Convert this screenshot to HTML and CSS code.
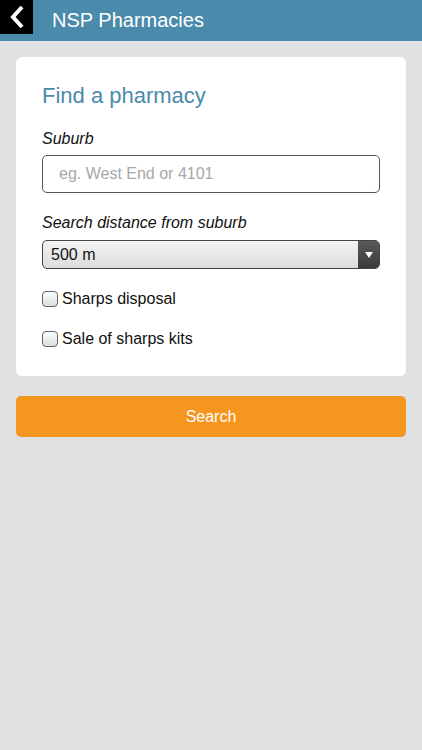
FILE: index.html
```html
<!DOCTYPE html>
<html lang="en">
<head>
    <meta charset="UTF-8">
    <meta name="viewport" content="width=device-width, initial-scale=1.0">
    <title>NSP Pharmacies</title>
    <link rel="stylesheet" href="styles.css">
</head>
<body>
    <header class="topbar">
        <a class="back" href="#">
            <svg width="16" height="24" viewBox="0 0 16 24">
                <path d="M13 2 L4 12 L13 22" fill="none" stroke="#fff" stroke-width="4"/>
            </svg>
        </a>
        <h1 class="title">NSP Pharmacies</h1>
    </header>

    <main class="content">
        <form class="card">
            <h2 class="card-title">Find a pharmacy</h2>

            <label class="field-label" for="suburb">Suburb</label>
            <input class="text-input" id="suburb" type="text" placeholder="eg. West End or 4101">

            <label class="field-label" for="distance">Search distance from suburb</label>
            <div class="select">
                <span class="select-value">500 m</span>
                <span class="select-arrow"></span>
            </div>

            <label class="check"><span class="box"></span>Sharps disposal</label>
            <label class="check"><span class="box"></span>Sale of sharps kits</label>
        </form>

        <button class="search-btn" type="button">Search</button>
    </main>
</body>
</html>
```

FILE: styles.css
```css
body {
    margin: 0;
    font-family: "Liberation Sans", Arial, sans-serif;
    background-color: #e0e1e3;
    min-height: 750px;
}

.topbar {
    display: flex;
    align-items: flex-start;
    height: 41px;
    background-color: #4a8aab;
}

.back {
    display: flex;
    align-items: center;
    justify-content: center;
    width: 33px;
    height: 34px;
    background-color: #000;
}

.title {
    margin: 0 0 0 19px;
    font-size: 20px;
    font-weight: normal;
    line-height: 41px;
    color: #fff;
}

.content {
    padding: 16px;
}

.card {
    display: flex;
    flex-direction: column;
    background-color: #fff;
    border-radius: 6px;
    padding: 24px 26px 25px;
}

.card > * {
    flex-shrink: 0;
}

.card-title {
    margin: 0 0 18px;
    font-size: 22px;
    font-weight: normal;
    color: #4a8aab;
    line-height: 30px;
}

.field-label {
    font-size: 16px;
    font-style: italic;
    color: #111;
    line-height: 20px;
    margin-bottom: 6px;
}

.text-input {
    box-sizing: border-box;
    height: 38px;
    padding: 0 16px;
    border: 1px solid #555;
    border-radius: 5px;
    font-family: inherit;
    font-size: 16px;
    margin-bottom: 20px;
}

.text-input::placeholder {
    color: #a8a8a8;
}

.select {
    display: flex;
    box-sizing: border-box;
    height: 29px;
    margin-top: 1px;
    border: 1px solid #444;
    border-radius: 5px;
    overflow: hidden;
    background: linear-gradient(#f4f4f4, #dcdcdc);
    margin-bottom: 18px;
}

.select-value {
    flex: 1;
    padding-left: 8px;
    font-size: 16px;
    line-height: 27px;
    color: #111;
}

.select-arrow {
    position: relative;
    width: 21px;
    background: linear-gradient(#5a5a5a, #3a3a3a);
}

.select-arrow::after {
    content: "";
    position: absolute;
    left: 7px;
    top: 11px;
    border-left: 4px solid transparent;
    border-right: 4px solid transparent;
    border-top: 6px solid #fff;
}

.check {
    display: flex;
    align-items: center;
    gap: 4px;
    font-size: 16px;
    color: #111;
    height: 24px;
    margin-bottom: 16px;
}

.check:last-child {
    margin-bottom: 0;
}

.box {
    box-sizing: border-box;
    width: 16px;
    height: 16px;
    border: 1px solid #666;
    border-radius: 4px;
    background: linear-gradient(#fff, #ddd);
}

.search-btn {
    display: block;
    width: 100%;
    height: 41px;
    margin-top: 20px;
    border: none;
    border-radius: 5px;
    background-color: #f5961f;
    color: #fff;
    font-family: inherit;
    font-size: 16px;
}
```
